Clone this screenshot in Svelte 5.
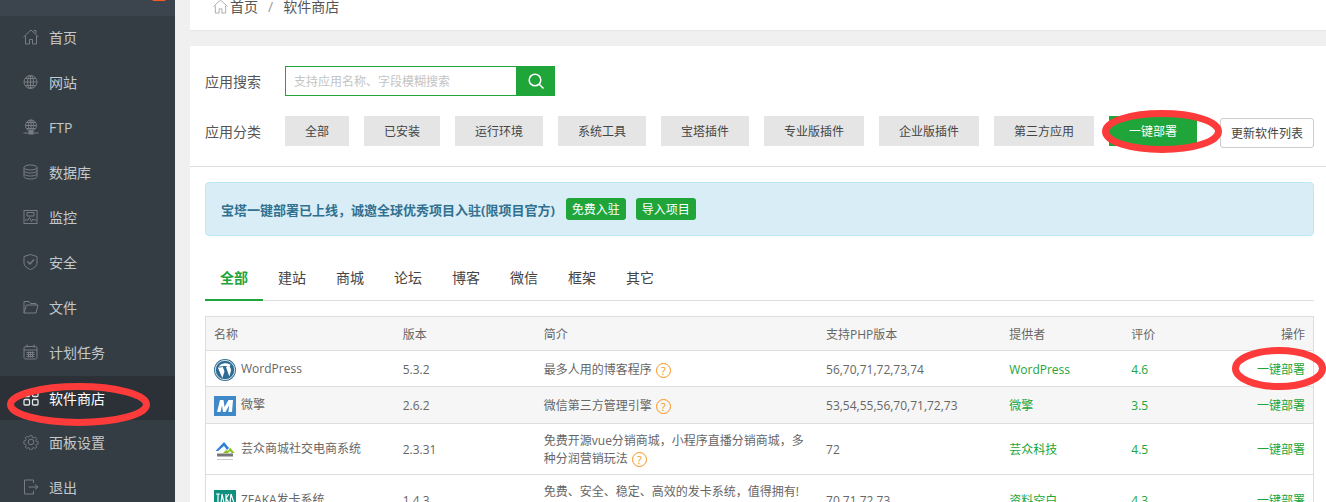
<script lang="ts">
	const menu = [
		{ key: 'home', label: '首页' },
		{ key: 'site', label: '网站' },
		{ key: 'ftp', label: 'FTP' },
		{ key: 'db', label: '数据库' },
		{ key: 'monitor', label: '监控' },
		{ key: 'safe', label: '安全' },
		{ key: 'files', label: '文件' },
		{ key: 'cron', label: '计划任务' },
		{ key: 'soft', label: '软件商店', active: true },
		{ key: 'config', label: '面板设置' },
		{ key: 'logout', label: '退出' }
	];

	const categories = ['全部', '已安装', '运行环境', '系统工具', '宝塔插件', '专业版插件', '企业版插件', '第三方应用'];
	const tabs = ['全部', '建站', '商城', '论坛', '博客', '微信', '框架', '其它'];

	const rows = [
		{ logo: 'wp', name: 'WordPress', ver: '5.3.2', desc: '最多人用的博客程序', php: '56,70,71,72,73,74', by: 'WordPress', score: '4.6' },
		{ logo: 'we', name: '微擎', ver: '2.6.2', desc: '微信第三方管理引擎', php: '53,54,55,56,70,71,72,73', by: '微擎', score: '3.5' },
		{ logo: 'yz', name: '芸众商城社交电商系统', ver: '2.3.31', desc: '免费开源vue分销商城，小程序直播分销商城，多种分润营销玩法', php: '72', by: '芸众科技', score: '4.5' },
		{ logo: 'zf', name: 'ZFAKA发卡系统', ver: '1.4.3', desc: '免费、安全、稳定、高效的发卡系统，值得拥有!', php: '70,71,72,73', by: '资料空白', score: '4.3' }
	];
</script>

<div class="page">
	<aside class="sidebar">
		<div class="side-top"><span class="badge"></span></div>
		<nav>
			{#each menu as item (item.key)}
				<div class="menu-item" class:active={item.active}>
					<svg class="menu-icon" viewBox="0 0 16 16" fill="none" stroke="currentColor" stroke-width="1">
						{#if item.key === 'home'}
							<path d="M.5 8 8 1l7.500 7M2.500 7v8h4v-4.500h3V15h4V7M11 2.500V1.500h2v3" />
						{:else if item.key === 'site'}
							<circle cx="7.500" cy="8" r="6.500" />
							<ellipse cx="7.500" cy="8" rx="3" ry="6.500" />
							<path d="M7.500 1.500v13M1 8h13M2 4.500h11M2 11.500h11" />
						{:else if item.key === 'ftp'}
							<circle cx="8" cy="6.500" r="5.500" />
							<ellipse cx="8" cy="6.500" rx="2.500" ry="5.500" />
							<path d="M8 1v11M2.500 6.500h11M3.500 3.500h9M3.500 9.500h9M.5 14h15" />
							<rect x="6" y="12.500" width="4" height="2.500" fill="currentColor" />
						{:else if item.key === 'db'}
							<ellipse cx="7.500" cy="3.500" rx="6.500" ry="2.500" />
							<path d="M1 3.500v9c0 1.400 2.900 2.500 6.500 2.500s6.500-1.100 6.500-2.500v-9M1 6.500C1 7.900 3.900 9 7.500 9S14 7.900 14 6.500M1 9.500C1 10.900 3.900 12 7.500 12S14 10.900 14 9.500" />
						{:else if item.key === 'monitor'}
							<rect x="1" y="1.500" width="13" height="13" />
							<path d="M4 3.500h7v3.500H4zM2 11h3l1.500-2.500 2 4 1.500-2.500 1 1h2" />
						{:else if item.key === 'safe'}
							<path d="M7.500.5 14 2.500v6.500c0 3-3.500 5.500-6.500 6.500C4.500 14.500 1 12 1 9V2.500z" />
							<path d="M4.500 7.500 7 10l4-4.500" stroke-width="1.400" />
						{:else if item.key === 'files'}
							<path d="M1 14V2.500h5l1.500 2h5.500v1.500M1 14h12l2-8H3.500z" />
						{:else if item.key === 'cron'}
							<rect x="1" y="2.500" width="13" height="12.500" rx="1.500" />
							<path d="M1 6h13M4 .5v3M11 .5v3M3.500 8.500h8M3.500 10.500h8M3.500 12.500h8M5.500 7.500v6M7.500 7.500v6M9.500 7.500v6" />
						{:else if item.key === 'soft'}
							<g stroke-width="1.300">
								<rect x="1" y="1" width="5.500" height="5.500" rx="1" />
								<rect x="9.500" y="1" width="5.500" height="5.500" rx="1" />
								<rect x="1" y="9.500" width="5.500" height="5.500" rx="1" />
								<rect x="9.500" y="9.500" width="5.500" height="5.500" rx="1" />
							</g>
						{:else if item.key === 'config'}
							<circle cx="8" cy="8" r="2.800" />
							<path d="M6.800 1h2.400l.4 2 1.400.6 1.700-1.100 1.700 1.700-1.100 1.700.6 1.400 2 .4v2.400l-2 .4-.6 1.400 1.100 1.700-1.700 1.700-1.700-1.100-1.400.6-.4 2H6.800l-.4-2-1.400-.6-1.700 1.100-1.700-1.700 1.100-1.700-.6-1.400-2-.4V6.800l2-.4.6-1.400-1.100-1.700 1.700-1.700 1.700 1.100 1.400-.6z" transform="translate(.8 .8) scale(.9)" />
						{:else}
							<path d="M10.500 4V1H1.500v14h9v-3M5.500 8H15M12 5.500 15 8l-3 2.500" />
						{/if}
					</svg>
					<span>{item.label}</span>
				</div>
			{/each}
		</nav>
		<svg class="ring ring-side" viewBox="0 0 143 43"><ellipse cx="71.500" cy="21.500" rx="68" ry="18" /></svg>
	</aside>

	<main class="content">
		<div class="crumbs">
			<svg class="crumb-home" viewBox="0 0 16 16" fill="none" stroke="#aaa" stroke-width="1"><path d="M.5 8 8 1l7.500 7M2.500 7v8h4v-4.500h3V15h4V7" /></svg>
			<span>首页</span>
			<span class="crumb-sep">/</span>
			<span>软件商店</span>
		</div>

		<section class="panel">
			<div class="filters">
				<div class="filter-row">
					<span class="filter-label">应用搜索</span>
					<div class="search">
						<input type="text" placeholder="支持应用名称、字段模糊搜索" />
						<button class="search-btn" aria-label="搜索">
							<svg viewBox="0 0 16 16" width="16" height="16" fill="none" stroke="#fff" stroke-width="1.500"><circle cx="7" cy="7" r="5.800" /><path d="m11.200 11.200 4.300 4.300" /></svg>
						</button>
					</div>
				</div>
				<div class="filter-row cats">
					<span class="filter-label">应用分类</span>
					<div class="cat-list">
						{#each categories as cat}
							<span class="cat">{cat}</span>
						{/each}
						<span class="cat cat-on">一键部署</span>
						<button class="refresh">更新软件列表</button>
					</div>
				</div>
			</div>

			<div class="body">
				<div class="notice">
					<strong>宝塔一键部署已上线，诚邀全球优秀项目入驻(限项目官方)</strong>
					<span class="notice-btn">免费入驻</span>
					<span class="notice-btn">导入项目</span>
				</div>

				<div class="tabs">
					{#each tabs as tab, i}
						<span class="tab" class:on={i === 0}>{tab}</span>
					{/each}
				</div>

				<table>
					<colgroup>
						<col style="width:189px" /><col style="width:141px" /><col style="width:282px" />
						<col style="width:183px" /><col style="width:122px" /><col style="width:97px" /><col style="width:93px" />
					</colgroup>
					<thead>
						<tr>
							<th>名称</th><th>版本</th><th>简介</th><th>支持PHP版本</th><th>提供者</th><th>评价</th><th class="right">操作</th>
						</tr>
					</thead>
					<tbody>
						{#each rows as row (row.logo)}
							<tr class="row-{row.logo}">
								<td>
									<div class="name">
										<svg class="logo" viewBox="0 0 22 22">
											{#if row.logo === 'wp'}
												<circle cx="11" cy="11" r="11" fill="#2f6c94" />
												<circle cx="11" cy="11" r="9.700" fill="none" stroke="#d8e4ec" stroke-width="1" />
												<path d="M3.800 8.500 8.300 19l2.200-6.400-1.800-4.800-1.200-.1V7h5.700v.7l-1.300.1 3.400 9.800 1.600-5.300c.5-1.800-.4-3-1.200-4.500-.3-.8.300-1.700 1.200-1.800A9 9 0 0 0 4.500 7.600h3v.9z" fill="#fff" />
											{:else if row.logo === 'we'}
												<rect y="1" width="22" height="20" fill="#3f89c9" />
												<path d="M3 17 6 5h3.500l1 7 4-7H19l-1 12h-3.500l.6-6.500L11.500 17H9l-1-6.500L6.500 17z" fill="#fff" />
											{:else if row.logo === 'yz'}
												<path d="M1.500 12 10 3l5 6-2 2-3-4-6 5z" fill="#2a7fe0" />
												<path d="M9 14l3-3 2 1 2-3.500 4.500 5.500h-3l-1.500-2-2 2z" fill="#8ec31f" />
												<rect x="3" y="14.500" width="16" height="3" fill="#777" />
												<rect x="3" y="20" width="16" height="1" fill="#ccc" />
											{:else}
												<rect width="22" height="22" fill="#0f8f7e" />
												<path d="M2 4h4M4 4v9M8 4l-1 9M8 4l2 9M12 4v9M12 8l3-4M12 8l3 5M17 4l-1 9M17 4l3 9" stroke="#fff" stroke-width="1.200" fill="none" />
											{/if}
										</svg>
										<span class="name-text">{row.name}</span>
									</div>
								</td>
								<td>{row.ver}</td>
								<td class="desc">{row.desc} <span class="help">?</span></td>
								<td>{row.php}</td>
								<td class="green">{row.by}</td>
								<td class="green">{row.score}</td>
								<td class="green right">一键部署</td>
							</tr>
						{/each}
					</tbody>
				</table>
			</div>
		</section>
		<svg class="ring ring-cat" viewBox="0 0 120 43"><ellipse cx="60" cy="21.500" rx="56.500" ry="18" /></svg>
		<svg class="ring ring-row" viewBox="0 0 94 43"><ellipse cx="47" cy="21.500" rx="43.500" ry="18" /></svg>
	</main>
</div>

<style>
	:global(body) {
		margin: 0;
		overflow: hidden;
	}

	.page {
		display: flex;
		width: 1326px;
		height: 502px;
		overflow: hidden;
		background: #f0f0f0;
		font-family: "Open Sans", "Noto Sans CJK SC", sans-serif;
		font-size: 12px;
		color: #666;
	}

	.sidebar {
		position: relative;
		flex: 0 0 175px;
		background: #353d44;
		color: #bbb;
	}

	.side-top {
		position: relative;
		height: 16px;
		overflow: hidden;
		background: #3c444d;
	}

	.badge {
		position: absolute;
		left: 152px;
		top: -6px;
		width: 14px;
		height: 7px;
		background: #f95c1e;
		border-radius: 2px;
	}

	.menu-item {
		display: flex;
		align-items: center;
		gap: 10px;
		height: 45px;
		padding: 0 0 3px 23px;
		box-sizing: border-box;
		font-size: 14px;
		color: #c4c8cb;
	}

	.menu-item.active {
		height: 44px;
		margin-bottom: 1px;
		padding-bottom: 1px;
		background: #2c3138;
		color: #fff;
	}

	.menu-icon {
		width: 16px;
		height: 16px;
		color: #777d83;
		flex: none;
	}

	.active .menu-icon {
		color: #e4e5e6;
	}

	.ring {
		position: absolute;
		fill: none;
		stroke: #fe3b3b;
		stroke-width: 7;
		pointer-events: none;
	}

	.ring-side {
		left: 7px;
		top: 383px;
		width: 143px;
		height: 43px;
	}

	.content {
		position: relative;
		flex: 1;
		padding-left: 15px;
		min-width: 0;
	}

	.crumbs {
		display: flex;
		align-items: flex-end;
		height: 31px;
		margin-bottom: 15px;
		padding: 0 0 16px 23px;
		box-sizing: border-box;
		background: #fff;
		border-bottom: 1px solid #e6e6e6;
		font-size: 14px;
		line-height: 14px;
		color: #555;
	}

	.crumb-home {
		width: 15px;
		height: 15px;
		margin-right: 2px;
	}

	.crumb-sep {
		margin: 0 10px;
		color: #999;
	}

	.panel {
		background: #fff;
	}

	.filters {
		height: 121px;
		padding: 20px 12px 0 15px;
		box-sizing: border-box;
		border-bottom: 1px solid #ddd;
	}

	.filter-row {
		display: flex;
		align-items: flex-start;
		height: 30px;
	}

	.cats {
		margin-top: 20px;
	}

	.filter-label {
		width: 80px;
		font-size: 14px;
		line-height: 32px;
		color: #555;
		flex: none;
	}

	.search {
		display: flex;
		width: 270px;
		height: 30px;
	}

	.search input {
		flex: 1;
		min-width: 0;
		padding: 0 8px;
		box-sizing: border-box;
		border: 1px solid #20a53a;
		border-right: none;
		outline: none;
		font: 12px "Open Sans", "Noto Sans CJK SC", sans-serif;
	}

	.search input::placeholder {
		color: #c4c4c4;
		opacity: 1;
	}

	.search-btn {
		display: flex;
		align-items: center;
		justify-content: center;
		width: 39px;
		padding: 0;
		border: none;
		background: #20a53a;
	}

	.cat-list {
		display: flex;
		align-items: flex-start;
		gap: 15px;
	}

	.cat {
		height: 30px;
		padding: 0 20px;
		background: #e5e5e5;
		line-height: 32px;
		color: #444;
	}

	.cat-on {
		background: #20a53a;
		color: #fff;
	}

	.refresh {
		height: 30px;
		margin: 2px 0 0 8px;
		padding: 0 10px;
		box-sizing: border-box;
		width: 94px;
		white-space: nowrap;
		background: #fff;
		border: 1px solid #ccc;
		border-radius: 3px;
		font: 12px "Open Sans", "Noto Sans CJK SC", sans-serif;
		color: #444;
	}

	.body {
		padding: 15px 12px 0 15px;
	}

	.notice {
		display: flex;
		align-items: center;
		gap: 10px;
		height: 54px;
		padding-left: 15px;
		box-sizing: border-box;
		background: #d9edf7;
		border: 1px solid #bce8f1;
		border-radius: 4px;
		color: #31708f;
		font-size: 13px;
	}

	.notice strong {
		margin-right: 1px;
		font-weight: 700;
	}

	.notice-btn {
		height: 22px;
		padding: 0 6px;
		background: #20a53a;
		border-radius: 3px;
		color: #fff;
		font-size: 12px;
		line-height: 23px;
	}

	.tabs {
		display: flex;
		height: 65px;
		box-sizing: border-box;
		align-items: flex-end;
		border-bottom: 1px solid #ddd;
	}

	.tab {
		width: 58px;
		height: 42px;
		margin-bottom: -1px;
		box-sizing: border-box;
		text-align: center;
		line-height: 37px;
		font-size: 14px;
		color: #444;
	}

	.tab.on {
		color: #20a53a;
		font-weight: 700;
		border-bottom: 2px solid #20a53a;
	}

	table {
		width: 1109px;
		margin-top: 15px;
		table-layout: fixed;
		border-collapse: collapse;
		border: 1px solid #ddd;
		border-bottom: none;
		font-size: 12px;
		color: #666;
	}

	th {
		height: 33px;
		padding: 0 8px;
		background: #f6f6f6;
		border-bottom: 1px solid #ddd;
		text-align: left;
		font-weight: 400;
	}

	td {
		height: 33px;
		padding: 2px 8px 0;
		border-bottom: 1px solid #ddd;
		line-height: 18px;
	}

	.row-we td {
		height: 34px;
		background: #f6f6f6;
	}

	.row-yz td,
	.row-zf td {
		height: 48px;
	}

	th.right,
	td.right {
		text-align: right;
	}

	.green {
		color: #20a53a;
	}

	.name {
		display: flex;
		align-items: center;
		gap: 5px;
		white-space: nowrap;
	}

	.name-text {
		margin-top: -2px;
	}

	.logo {
		width: 22px;
		height: 22px;
		flex: none;
	}

	td.desc {
		padding-right: 12px;
	}

	.help {
		display: inline-block;
		width: 13px;
		height: 13px;
		margin-left: 1px;
		border: 1.5px solid #f7941d;
		border-radius: 50%;
		color: #f7941d;
		text-align: center;
		line-height: 13px;
		font-size: 11px;
		vertical-align: -1px;
	}

	.ring-cat {
		left: 927px;
		top: 110px;
		width: 120px;
		height: 43px;
	}

	.ring-row {
		left: 1057px;
		top: 347px;
		width: 94px;
		height: 43px;
	}
</style>
